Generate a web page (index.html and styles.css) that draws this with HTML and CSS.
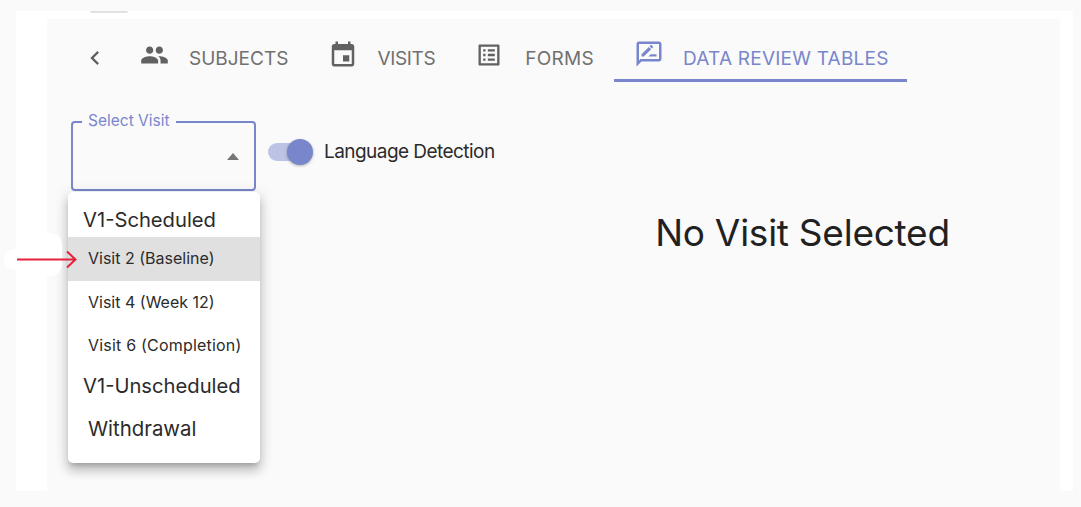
FILE: index.html
```html
<!DOCTYPE html>
<html lang="en">
<head>
    <meta charset="UTF-8">
    <title>Data Review Tables</title>
    <link rel="stylesheet" href="styles.css">
</head>
<body>
    <div class="marco">
        <div class="conteudo">
            <nav class="abas">
                <button class="voltar">
                    <svg width="28" height="28" viewBox="0 0 24 24"><path d="M15.41 7.41 14 6l-6 6 6 6 1.41-1.41L10.83 12z"/></svg>
                </button>
                <div class="aba aba-subjects">
                    <svg width="32" height="32" viewBox="0 0 24 24"><path d="M16 11c1.66 0 2.99-1.34 2.99-3S17.66 5 16 5s-3 1.34-3 3 1.34 3 3 3zm-8 0c1.66 0 2.99-1.34 2.99-3S9.66 5 8 5 5 6.34 5 8s1.34 3 3 3zm0 2c-2.33 0-7 1.17-7 3.5V19h14v-2.5C15 14.17 10.33 13 8 13zm8 0c-.29 0-.62.02-.97.05 1.16.84 1.97 1.97 1.97 3.45V19h6v-2.5c0-2.33-4.67-3.5-7-3.5z"/></svg>
                    <span>SUBJECTS</span>
                </div>
                <div class="aba aba-visits">
                    <svg width="30" height="30" viewBox="0 0 24 24"><path d="M17 13h-5v5h5v-5zM16 2v2H8V2H6v2H5c-1.11 0-1.99.9-1.99 2L3 20c0 1.1.89 2 2 2h14c1.1 0 2-.9 2-2V6c0-1.1-.9-2-2-2h-1V2h-2zm3 18H5V9h14v11z"/></svg>
                    <span>VISITS</span>
                </div>
                <div class="aba aba-forms">
                    <svg width="28" height="28" viewBox="0 0 24 24"><path d="M19 5v14H5V5h14m1.1-2H3.9c-.5 0-.9.4-.9.9v16.2c0 .4.4.9.9.9h16.2c.4 0 .9-.5.9-.9V3.900c0-.5-.5-.9-.9-.9zM11 7h6v2h-6V7zm0 4h6v2h-6v-2zm0 4h6v2h-6v-2zM7 7h2v2H7V7zm0 4h2v2H7v-2zm0 4h2v2H7v-2z"/></svg>
                    <span>FORMS</span>
                </div>
                <div class="aba aba-ativa">
                    <svg width="30" height="30" viewBox="0 0 24 24"><path d="M20 2H4c-1.100 0-2 .9-2 2v18l4-4h14c1.100 0 2-.9 2-2V4c0-1.100-.9-2-2-2zm0 14H5.170L4 17.170V4h16v12z"/><path d="M11.500 14H18v-1.800h-4.700zM6 12.200V14h1.800l5.900-5.900-1.800-1.800zM15.200 6.600c.2-.2.2-.5 0-.7l-1.100-1.100c-.2-.2-.5-.2-.7 0l-.9.9 1.800 1.800z"/></svg>
                    <span>DATA REVIEW TABLES</span>
                </div>
            </nav>
            <div class="corpo">
                <div class="controles">
                    <div class="seletor">
                        <label class="seletor-rotulo">Select Visit</label>
                        <span class="seta"></span>
                    </div>
                    <div class="chave">
                        <span class="chave-trilho"><span class="chave-bola"></span></span>
                        <span class="chave-texto">Language Detection</span>
                    </div>
                    <ul class="menu">
                        <li class="item item-grupo item-primeiro">V1-Scheduled</li>
                        <li class="item item-marcado">Visit 2 (Baseline)</li>
                        <li class="item">Visit 4 (Week 12)</li>
                        <li class="item item-longo">Visit 6 (Completion)</li>
                        <li class="item item-grupo item-unscheduled">V1-Unscheduled</li>
                        <li class="item item-grande">Withdrawal</li>
                    </ul>
                </div>
                <h1 class="vazio">No Visit Selected</h1>
            </div>
        </div>
        <span class="aba-topo"></span>
    </div>
    <svg class="anotacao" width="80" height="46" viewBox="0 0 80 46">
        <rect x="0" y="16" width="30" height="21" rx="10" fill="#fff"/>
        <rect x="12" y="0" width="46" height="43" rx="12" fill="#fff"/>
        <path d="M13 26.500H71M63 18.500l8.500 8-8.500 8" fill="none" stroke="#e5213d" stroke-width="2"/>
    </svg>
</body>
</html>
```
FILE: styles.css
```css
* {
    margin: 0;
    padding: 0;
    box-sizing: border-box;
}
html, body {
    height: 100%;
}
body {
    background-color: #fafafa;
    font-family: Inter, "Noto Sans", sans-serif;
    color: #2b2b2b;
    overflow: hidden;
    position: relative;
}
.marco {
    position: relative;
    margin: 11px 8px 0 16px;
    height: 480px;
    padding: 8px 13px 0 31px;
    background-color: #fff;
}
.conteudo {
    height: 496px;
    background-color: #fafafa;
}
.aba-topo {
    position: absolute;
    top: 0;
    left: 74px;
    width: 38px;
    height: 2px;
    border-radius: 0 0 12px 12px;
    background-color: #e2e2e2;
}

/* abas */
.abas {
    display: flex;
    align-items: flex-start;
    height: 63px;
    padding: 0 0 0 36px;
}
.voltar {
    width: 24px;
    height: 24px;
    margin-top: 27px;
    border: none;
    background: none;
    fill: #616161;
}
.voltar svg {
    display: block;
    margin: -2px;
}
.aba {
    display: flex;
    align-items: flex-start;
    height: 63px;
    color: #707070;
    fill: #616161;
    font-size: 19px;
    line-height: 23px;
}
.aba span {
    margin-top: 28px;
}
.aba-subjects {
    margin-left: 33px;
}
.aba-subjects svg {
    margin: 20px 20px 0 0;
    width: 29px;
}
.aba-visits {
    margin-left: 40px;
}
.aba-visits svg {
    margin: 20px 19px 0 0;
    width: 30px;
}
.aba-visits span {
    letter-spacing: -0.35px;
}
.aba-forms {
    margin-left: 40px;
}
.aba-forms svg {
    margin: 22px 22px 0 0;
}
.aba-forms span {
    letter-spacing: 0.3px;
}
.aba-ativa {
    margin-left: 20px;
    width: 293px;
    padding-left: 20px;
    color: #7986cb;
    fill: #7986cb;
    border-bottom: 3px solid #7986cb;
    height: 63px;
}
.aba-ativa span {
    letter-spacing: 0.22px;
}
.aba-ativa svg {
    margin: 20px 19px 0 0;
}

/* corpo */
.corpo {
    display: grid;
    grid-template-columns: 498px 1fr;
}
.controles {
    position: relative;
    display: flex;
    align-items: flex-start;
    padding: 39px 0 0 24px;
}
.seletor {
    position: relative;
    width: 185px;
    height: 70px;
    border: 2px solid #7986cb;
    border-radius: 4px;
}
.seletor-rotulo {
    position: absolute;
    top: -11px;
    left: 9px;
    padding: 0 6px;
    background-color: #fafafa;
    color: #7986cb;
    font-size: 15.5px;
    line-height: 18px;
}
.seta {
    position: absolute;
    top: 30px;
    right: 15px;
    border-left: 6px solid transparent;
    border-right: 6px solid transparent;
    border-bottom: 7px solid #757575;
}
.chave {
    display: flex;
    align-items: center;
    margin: 19px 0 0 12px;
}
.chave-trilho {
    position: relative;
    display: block;
    width: 42px;
    height: 18px;
    border-radius: 9px;
    background-color: #bcc3e5;
}
.chave-bola {
    position: absolute;
    top: -4px;
    right: -3px;
    width: 26px;
    height: 26px;
    border-radius: 50%;
    background-color: #7986cb;
    box-shadow: 0 1px 3px rgba(0, 0, 0, 0.3);
}
.chave-texto {
    margin-left: 14px;
    font-size: 19px;
    letter-spacing: -0.55px;
}

/* menu */
.menu {
    position: absolute;
    top: 110px;
    left: 21px;
    width: 192px;
    height: 271px;
    list-style: none;
    background-color: #fff;
    border-radius: 5px;
    box-shadow: 0 5px 5px -3px rgba(0,0,0,0.2), 0 8px 10px 1px rgba(0,0,0,0.14), 0 3px 14px 2px rgba(0,0,0,0.12);
}
.item {
    height: 43.5px;
    padding: 0 0 0 20px;
    font-size: 16px;
    line-height: 43px;
    white-space: nowrap;
}
.item-grupo {
    padding-left: 15px;
    font-size: 20.2px;
}
.item-primeiro {
    height: 45px;
    line-height: 55px;
}
.item-marcado {
    background-color: #e0e0e0;
}
.item-longo {
    letter-spacing: 0.2px;
}
.item-unscheduled {
    margin-top: -4px;
}
.item-grande {
    font-size: 20.4px;
}

.vazio {
    margin-top: 120px;
    text-align: center;
    font-size: 37px;
    line-height: 62px;
    font-weight: 400;
    letter-spacing: -0.25px;
    color: #212121;
}

/* seta vermelha */
.anotacao {
    position: absolute;
    top: 233px;
    left: 4px;
}
```
